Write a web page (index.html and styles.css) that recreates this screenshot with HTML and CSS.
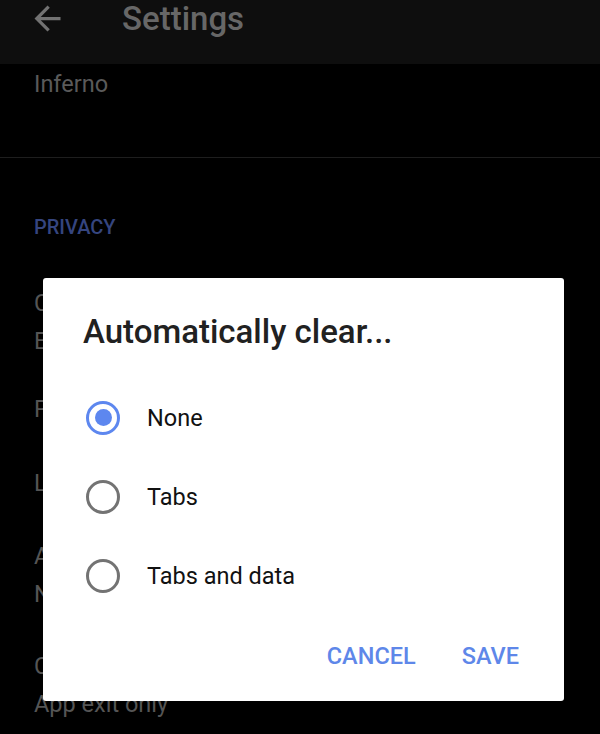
FILE: index.html
```html
<!DOCTYPE html>
<html lang="en">
<head>
<meta charset="utf-8">
<title>Settings</title>
<link rel="stylesheet" href="styles.css">
</head>
<body>
<header class="appbar">
  <svg class="back" viewBox="0 0 24 24" width="39" height="39" aria-hidden="true">
    <path d="M20 11H7.83l5.59-5.59L12 4l-8 8 8 8 1.41-1.41L7.83 13H20v-2z" fill="currentColor"/>
  </svg>
  <h1 class="appbar-title">Settings</h1>
</header>

<main class="list">
  <div class="theme-value">Inferno</div>
  <hr class="divider">
  <div class="section-label">PRIVACY</div>

  <div class="item two first">
    <div class="item-title">Cookies</div>
    <div class="item-sub">Enabled</div>
  </div>
  <div class="item one">
    <div class="item-title">Passwords</div>
  </div>
  <div class="item one">
    <div class="item-title">Logins</div>
  </div>
  <div class="item two tall">
    <div class="item-title">Automatically clear...</div>
    <div class="item-sub">None</div>
  </div>
  <div class="item two tall">
    <div class="item-title">Clear data</div>
    <div class="item-sub">App exit only</div>
  </div>
</main>

<section class="dialog" role="dialog" aria-labelledby="dlg-title">
  <h2 class="dialog-title" id="dlg-title">Automatically clear...</h2>
  <div class="options">
    <div class="option">
      <span class="radio checked"><span class="dot"></span></span>
      <span class="option-label">None</span>
    </div>
    <div class="option">
      <span class="radio"></span>
      <span class="option-label">Tabs</span>
    </div>
    <div class="option">
      <span class="radio"></span>
      <span class="option-label">Tabs and data</span>
    </div>
  </div>
  <div class="actions">
    <button class="btn">CANCEL</button>
    <button class="btn">SAVE</button>
  </div>
</section>
</body>
</html>
```

FILE: styles.css
```css
* { box-sizing: border-box; }

html, body {
  margin: 0;
  padding: 0;
  background: #000;
  height: 734px;
  overflow: hidden;
}

body {
  font-family: Roboto, "Noto Sans", "Liberation Sans", sans-serif;
  position: relative;
}

.appbar {
  height: 64px;
  background: #0e0e0e;
  display: flex;
  align-items: flex-start;
}

.back {
  color: #727272;
  margin-left: 28px;
  margin-top: -1px;
  flex: none;
}

.appbar-title {
  margin: 0 0 0 55px;
  font-size: 33px;
  font-weight: 500;
  line-height: 38px;
  color: #676767;
}

.list {
  padding-left: 34px;
}

.theme-value {
  margin-top: 5px;
  font-size: 23.5px;
  line-height: 30px;
  color: #5a5a5a;
}

.divider {
  border: 0;
  height: 1px;
  background: #1e1e1e;
  margin: 58px 0 0 -34px;
}

.section-label {
  margin-top: 57px;
  font-size: 20px;
  font-weight: 500;
  line-height: 24px;
  color: #35457f;
}

.item {
  display: flex;
  flex-direction: column;
  justify-content: center;
}

.item.one { height: 74px; }
.item.two { height: 100px; }
.item.two.tall { height: 110px; }
.item.first { margin-top: 33px; }

.item-title,
.item-sub {
  font-size: 23.5px;
  line-height: 30px;
  color: #555;
  white-space: nowrap;
}

.item-sub { margin-top: 8px; }

.dialog {
  position: absolute;
  left: 43px;
  top: 278px;
  width: 521px;
  height: 423px;
  background: #fff;
  border-radius: 3px;
  padding: 34px 45px 25px 40px;
  display: flex;
  flex-direction: column;
}

.dialog-title {
  margin: 0;
  font-size: 33px;
  font-weight: 500;
  line-height: 40px;
  color: #212121;
  white-space: nowrap;
}

.options {
  margin-top: 26px;
  display: flex;
  flex-direction: column;
}

.option {
  height: 79px;
  display: flex;
  align-items: center;
}

.radio {
  width: 34px;
  height: 34px;
  border-radius: 50%;
  border: 3px solid #737373;
  margin-left: 3px;
  display: flex;
  align-items: center;
  justify-content: center;
  flex: none;
}

.radio.checked { border-color: #5d87ef; }

.dot {
  width: 17px;
  height: 17px;
  border-radius: 50%;
  background: #5d87ef;
}

.option-label {
  margin-left: 27px;
  font-size: 23.5px;
  line-height: 30px;
  color: #111;
}

.actions {
  margin-top: auto;
  display: flex;
  justify-content: flex-end;
  gap: 46px;
}

.btn {
  border: 0;
  background: none;
  padding: 0;
  font-family: inherit;
  font-size: 23.5px;
  font-weight: 500;
  line-height: 40px;
  color: #5e87e9;
  letter-spacing: 0;
}
```
